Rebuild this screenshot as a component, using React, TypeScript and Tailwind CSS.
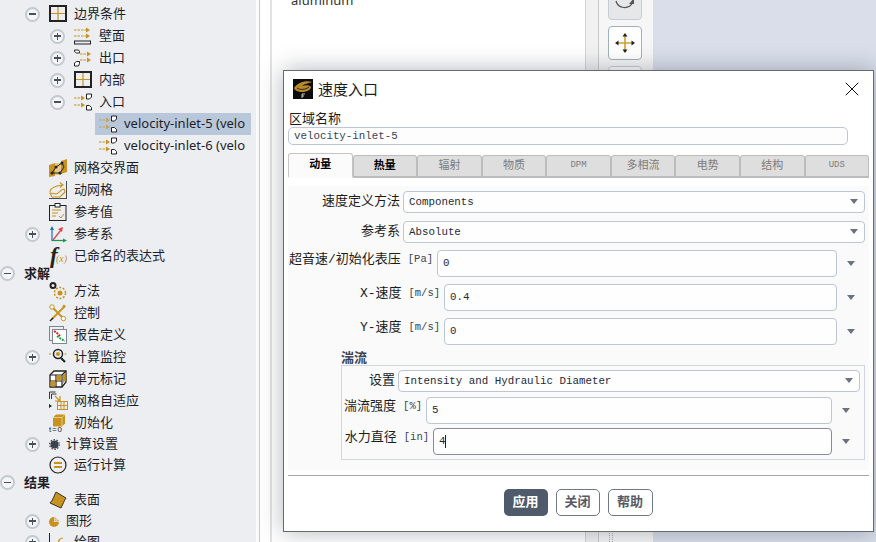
import type { ReactNode } from 'react';
import { X } from 'lucide-react';

const gold = '#c8921e';
const ink = '#222';

function Svg({ w = 18, h = 18, children }: { w?: number; h?: number; children: ReactNode }) {
  return (
    <svg width={w} height={h} viewBox={`0 0 ${w} ${h}`} fill="none" className="shrink-0">
      {children}
    </svg>
  );
}

function Arrow({ y, x = 0, len = 12 }: { y: number; x?: number; len?: number }) {
  return (
    <g>
      <path d={`M${x} ${y}h${len}`} stroke={gold} strokeWidth="1" strokeDasharray="2.5 1" />
      <path d={`M${x + len - 1} ${y - 2.5}l4 2.5l-4 2.5z`} fill={gold} />
    </g>
  );
}

function TreeIcon({ name }: { name: string }) {
  switch (name) {
    case 'grid':
      return (
        <Svg>
          <rect x="1" y="1" width="16" height="15" stroke={ink} strokeWidth="2" />
          <path d="M9 2v13M2 8.500h14" stroke={gold} strokeWidth="1.200" />
        </Svg>
      );
    case 'wall':
      return (
        <Svg>
          <Arrow y={3} x={0} len={13} />
          <Arrow y={9} x={0} len={13} />
          <rect x="0.500" y="14" width="16" height="3" stroke={ink} strokeWidth="1" />
        </Svg>
      );
    case 'outlet':
      return (
        <Svg>
          <path d="M0.500 1h4l1 1.500v1.500h-3l-2-1.500z" stroke={ink} fill="#fff" />
          <path d="M0.500 17v-3l2-1.500h3v2l-1 2.500z" stroke={ink} fill="#fff" />
          <Arrow y={5} x={6} len={8} />
          <Arrow y={11} x={6} len={8} />
        </Svg>
      );
    case 'inlet':
      return (
        <Svg>
          <Arrow y={5} x={0} len={8} />
          <Arrow y={12} x={0} len={8} />
          <path d="M12.500 1h5v3l-2 2h-3z" stroke={ink} fill="#fff" />
          <path d="M12.500 12.500h3l2 2v2.500h-5z" stroke={ink} fill="#fff" />
        </Svg>
      );
    case 'inletSel':
      return (
        <Svg>
          <g opacity="0.65">
            <Arrow y={5} x={0} len={8} />
            <Arrow y={12} x={0} len={8} />
          </g>
          <path d="M12.500 1h5v3l-2 2h-3z" stroke={ink} fill="#fff" />
          <path d="M12.500 12.500h3l2 2v2.500h-5z" stroke={ink} fill="#fff" />
        </Svg>
      );
    case 'interface':
      return (
        <Svg>
          <path d="M0 6l6-2v13l-6 1zM12 2l6-2v13l-6 2z" fill={gold} />
          <path d="M6 4h6v12H6z" fill="#e6c98a" />
          <path d="M3 14l4-6l6-4l2 4l-4 6z" stroke={ink} strokeWidth="1" />
          <circle cx="3" cy="14" r="1.500" fill={ink} />
          <circle cx="7" cy="8" r="1.500" fill={ink} />
          <circle cx="13" cy="4" r="1.500" fill={ink} />
          <circle cx="11" cy="14" r="1.500" fill={ink} />
        </Svg>
      );
    case 'dynamic':
      return (
        <Svg>
          <path d="M17.500 0v18M0 17.500h17" stroke={ink} strokeWidth="0.800" />
          <path d="M1 11c0-4 4-5 7-6l5-1M11 1.500l3 2.500l-3 2.500" stroke={gold} strokeWidth="1.100" />
          <path d="M1 12l2 4h8l5-5l-1-3c-4 0-5 5-8 5c-2 0-3-1-6-1z" stroke={gold} strokeWidth="1.100" />
        </Svg>
      );
    case 'refval':
      return (
        <Svg>
          <rect x="0.500" y="2.500" width="16.500" height="15" stroke={ink} />
          <rect x="6" y="0.500" width="5" height="3.500" fill="#fff" stroke={ink} />
          <path d="M3 7h9M3 10h6M3 13h4" stroke={gold} />
          <path d="M10 13l2 2l3-4" stroke={gold} />
        </Svg>
      );
    case 'frame':
      return (
        <Svg>
          <path d="M3 4v12" stroke="#1670b8" strokeWidth="1.200" />
          <path d="M1 5l2-4l2 4z" fill="#1670b8" />
          <path d="M3 15.500h12" stroke="#169a4a" strokeWidth="1.200" />
          <path d="M14 13.500l4 2l-4 2z" fill="#169a4a" />
          <path d="M4 15L12 5" stroke="#e04848" strokeWidth="1.300" />
          <path d="M9 4l5-2l-1 5z" fill="#e04848" />
        </Svg>
      );
    case 'fx':
      return (
        <div className="w-[18px] h-[18px] shrink-0 relative font-['Liberation_Serif',serif] italic text-[#222] leading-none">
          <span className="absolute left-[1px] -top-[3px] text-[23px] font-bold">f</span>
          <span className="absolute left-[7px] top-[7px] text-[10px] text-[#c8921e]">(x)</span>
        </div>
      );
    case 'method':
      return (
        <Svg>
          <circle cx="4" cy="3.500" r="2.500" stroke={ink} strokeWidth="2" />
          <circle cx="11" cy="11" r="2.500" fill={gold} />
          <circle cx="11" cy="11" r="5.500" stroke={gold} strokeWidth="1.500" strokeDasharray="2 1.500" />
        </Svg>
      );
    case 'control':
      return (
        <Svg>
          <path d="M2 2l14 14M16 2L3 15" stroke={gold} strokeWidth="1.800" />
          <circle cx="3" cy="3" r="2.200" stroke={gold} fill="#fff" />
          <circle cx="14.500" cy="14.500" r="2.200" stroke={gold} fill="#fff" />
          <path d="M14 1.500l2 1.500" stroke={gold} strokeWidth="2.500" />
          <path d="M1 17l3-3" stroke={ink} strokeWidth="1.500" />
        </Svg>
      );
    case 'report':
      return (
        <Svg>
          <rect x="0.500" y="0.500" width="14" height="14" fill="#eee" stroke="#7d8794" />
          <rect x="3.500" y="3.500" width="14" height="14" fill="#fff" stroke="#7d8794" />
          <path d="M5 5l3 2l3 3" stroke="#d92020" strokeWidth="2" strokeDasharray="2 1" />
          <path d="M8 10l4 3l4 2" stroke="#20a040" strokeWidth="2" strokeDasharray="2 1" />
        </Svg>
      );
    case 'monitor':
      return (
        <Svg>
          <path d="M0 6h2M15.500 6h2" stroke={gold} />
          <circle cx="9" cy="6" r="4.500" stroke={ink} strokeWidth="1.500" />
          <circle cx="9" cy="6" r="2" fill={gold} />
          <path d="M12 10l4 4" stroke={ink} strokeWidth="2.200" />
        </Svg>
      );
    case 'cell':
      return (
        <Svg>
          <path d="M1 5l4-4h12v11l-4 5H1z" stroke={ink} strokeWidth="1.300" fill="#fff" />
          <path d="M1 5h12v12M13 5l4-4M7 5v12M1 11h12" stroke={ink} strokeWidth="1.200" />
          <rect x="1.500" y="11.500" width="5" height="5" fill={gold} />
          <rect x="7.500" y="5.500" width="5" height="5" fill={gold} />
          <path d="M14 5l2.500-2.500v8L14 13z" fill={gold} />
        </Svg>
      );
    case 'adapt':
      return (
        <Svg w={20} h={20}>
          <path d="M0.500 8V1h6M2.500 8V3h5" stroke={ink} strokeWidth="0.900" />
          <path d="M0 13l3 2l-3 2z" fill={ink} />
          <path d="M6 5l5 5M11 5v5H6" stroke={gold} strokeWidth="1.200" />
          <rect x="8.500" y="10.500" width="10" height="8" stroke={gold} />
          <path d="M12 11v7M15 11v7M9 14.500h9" stroke={gold} />
        </Svg>
      );
    case 'init':
      return (
        <Svg>
          <path d="M4 3.500l3-3h9v9l-3 3H4z" fill={gold} />
          <path d="M4 3.500h9v9M13 3.500l3-3" stroke="#fff" strokeWidth="0.500" />
          <text x="0" y="18" fontSize="8" fill={ink} fontFamily="Liberation Sans, sans-serif" letterSpacing="0.800">t=0</text>
        </Svg>
      );
    case 'gear':
      return (
        <Svg w={11} h={11}>
          <circle cx="5.500" cy="5.500" r="4" fill="#3c4350" />
          <circle cx="5.500" cy="5.500" r="4.800" stroke="#3c4350" strokeWidth="1.200" strokeDasharray="1.500 1.500" />
        </Svg>
      );
    case 'run':
      return (
        <Svg>
          <circle cx="9" cy="9" r="8" stroke={ink} strokeWidth="1.200" />
          <path d="M5 7h8M5 11h8" stroke={gold} strokeWidth="2" />
        </Svg>
      );
    case 'surface':
      return (
        <Svg>
          <path d="M7 1l10 6c-2 3-3 6-5 10L1 12c3-3 4-7 6-11z" fill={gold} stroke={ink} strokeWidth="0.900" />
        </Svg>
      );
    case 'graphics':
      return (
        <Svg w={11} h={11}>
          <circle cx="5" cy="6" r="5" fill={gold} />
          <path d="M5 0.500h6v5.500H5z" fill="#eceef1" />
          <path d="M6 1.500l3.500 3.500H6z" stroke={gold} strokeWidth="0.700" />
        </Svg>
      );
    case 'plot':
      return (
        <Svg>
          <path d="M0.500 0v18" stroke={ink} />
          <path d="M9 14c0-6 1-9 5-9" stroke={gold} strokeWidth="1.200" />
        </Svg>
      );
    default:
      return null;
  }
}

function Expander({ open }: { open: boolean }) {
  return (
    <span className="w-[15px] h-[15px] rounded-full border-2 border-[#c3c9d1] bg-[#f4f5f7] flex items-center justify-center shrink-0 relative">
      <span className="w-[7px] h-[1.500px] bg-[#4a505a] block" />
      {!open && <span className="absolute w-[1.500px] h-[7px] bg-[#4a505a] block" />}
    </span>
  );
}

type Row = {
  pad: number;
  exp?: 'open' | 'closed';
  icon?: string;
  label: string;
  h?: number;
  gap?: number;
  bold?: boolean;
  leaf?: boolean;
  selected?: boolean;
};

// pad = left edge of the expander slot (expander is 15 wide, icon follows 9 later)
const rows: Row[] = [
  { pad: 25, exp: 'open', icon: 'grid', label: '边界条件' },
  { pad: 50, exp: 'closed', icon: 'wall', label: '壁面' },
  { pad: 50, exp: 'closed', icon: 'outlet', label: '出口' },
  { pad: 50, exp: 'closed', icon: 'grid', label: '内部' },
  { pad: 50, exp: 'open', icon: 'inlet', label: '入口' },
  { pad: 99, leaf: true, icon: 'inletSel', label: 'velocity-inlet-5 (velo', selected: true },
  { pad: 99, leaf: true, icon: 'inlet', label: 'velocity-inlet-6 (velo' },
  { pad: 25, icon: 'interface', label: '网格交界面' },
  { pad: 25, icon: 'dynamic', label: '动网格' },
  { pad: 25, icon: 'refval', label: '参考值' },
  { pad: 25, exp: 'closed', icon: 'frame', label: '参考系' },
  { pad: 25, icon: 'fx', label: '已命名的表达式' },
  { pad: 0, exp: 'open', label: '求解', bold: true, h: 13 },
  { pad: 25, icon: 'method', label: '方法' },
  { pad: 25, icon: 'control', label: '控制' },
  { pad: 25, icon: 'report', label: '报告定义' },
  { pad: 25, exp: 'closed', icon: 'monitor', label: '计算监控' },
  { pad: 25, icon: 'cell', label: '单元标记' },
  { pad: 25, icon: 'adapt', label: '网格自适应' },
  { pad: 25, icon: 'init', label: '初始化' },
  { pad: 25, exp: 'closed', icon: 'gear', label: '计算设置', h: 20, gap: 2 },
  { pad: 25, icon: 'run', label: '运行计算' },
  { pad: 0, exp: 'open', label: '结果', bold: true, h: 13 },
  { pad: 25, icon: 'surface', label: '表面' },
  { pad: 25, exp: 'closed', icon: 'graphics', label: '图形', h: 20, gap: 2 },
  { pad: 25, exp: 'closed', icon: 'plot', label: '绘图' },
];

function TreeRow({ row }: { row: Row }) {
  return (
    <div
      className="flex items-center whitespace-nowrap"
      style={{ height: row.h ?? 22, paddingLeft: row.pad }}
    >
      {row.leaf ? (
        <div className={`flex items-center -ml-[4px] pl-[4px] h-[22px] w-[156px] overflow-hidden shrink-0 ${row.selected ? 'bg-[#b9c7da]' : ''}`}>
          <TreeIcon name={row.icon!} />
          <span className="ml-[7px]">{row.label}</span>
        </div>
      ) : (
        <>
          {row.exp ? <Expander open={row.exp === 'open'} /> : <span className="w-[15px] shrink-0" />}
          {row.icon && (
            <span className={`ml-[9px] flex ${row.gap ? '' : 'w-[18px]'}`}>
              <TreeIcon name={row.icon} />
            </span>
          )}
          <span className={`${row.gap ? 'ml-[6px]' : row.icon ? 'ml-[7px]' : 'ml-[9px]'} ${row.bold ? 'font-bold' : ''}`}>
            {row.label}
          </span>
        </>
      )}
    </div>
  );
}

function Caret() {
  return <span className="w-0 h-0 border-l-[4px] border-r-[4px] border-t-[5px] border-l-transparent border-r-transparent border-t-[#6b7280] block" />;
}

function SelectField({ label, value, width }: { label: string; value: string; width: string }) {
  return (
    <div className="flex items-center h-[22px]">
      <span className={`${width} shrink-0 text-right pr-[3px] text-[13px]`}>{label}</span>
      <div className="flex-1 h-full rounded-[4px] border border-[#bcc6d6] bg-[#fefefe] flex items-center justify-between pl-[5px] pr-[5px]">
        <span className="text-[10.800px] text-[#1e2a3a]">{value}</span>
        <span className="mr-[1px] -mt-[2px]"><Caret /></span>
      </div>
    </div>
  );
}

function NumberField({
  label,
  unit,
  value,
  width,
  focus,
  caret,
}: {
  label: string;
  unit: string;
  value: string;
  width: string;
  focus?: boolean;
  caret?: boolean;
}) {
  return (
    <div className="flex items-start h-[27px]">
      <div className={`${width} shrink-0 flex justify-end items-center h-[20px] pr-[4px] text-[13px] whitespace-nowrap`}>
        <span>{label}</span>
        <span className="ml-[7px] text-[10.500px] text-[#3a4454]">{unit}</span>
      </div>
      <div
        className={`flex-1 h-full rounded-[4px] border bg-[#fefefe] flex items-center pl-[5px] text-[10.800px] text-[#1e2a3a] ${focus ? 'border-[#858d9a]' : 'border-[#bcc6d6]'}`}
      >
        {value}
        {caret && <span className="w-px h-[13px] bg-[#222] block" />}
      </div>
      <span className="w-[28px] h-full shrink-0 flex items-center justify-center"><Caret /></span>
    </div>
  );
}

const tabs = [
  { name: '动量', on: true },
  { name: '热量', strong: true },
  { name: '辐射' },
  { name: '物质' },
  { name: 'DPM', latin: true },
  { name: '多相流' },
  { name: '电势' },
  { name: '结构' },
  { name: 'UDS', latin: true },
];

function Dialog() {
  return (
    <div className="absolute left-[283px] top-[70px] w-[591px] h-[462px] bg-white border border-[#666b70] shadow-[0_0_22px_rgba(40,45,60,0.35)] font-['Liberation_Mono','Noto_Sans_CJK_SC',monospace] text-[#1c1c1c] px-[4px]">
      <div className="flex items-center h-[36px] pl-[5px] font-['Noto_Sans_CJK_SC',sans-serif]">
        <svg width="20" height="20" viewBox="0 0 20 20" className="shrink-0">
          <rect width="20" height="20" fill="#0c0c0c" />
          <path d="M1 9c4-6 12-8 18-6c-3 1-8 2-10 4c3-1 8-1 9 1c0 3-5 5-9 5C6 13 2 12 1 9z" fill="#b8892a" />
          <path d="M4 9c3 2 8 2 12-1" stroke="#0c0c0c" strokeWidth="0.800" fill="none" />
          <path d="M9 15h3M9 17h2M9 15v4" stroke="#ddd" strokeWidth="0.900" />
        </svg>
        <span className="ml-[5px] text-[15px]">速度入口</span>
        <span className="ml-auto mr-[5px] flex"><X size={24} strokeWidth={1} color="#111" /></span>
      </div>
      <div className="text-[13px] leading-[15px] pl-[1px] mt-[3px] mb-[2px] font-['Noto_Sans_CJK_SC',sans-serif]">区域名称</div>
      <div className="w-[560px] h-[18px] rounded-[5px] border border-[#bcc6d6] bg-[#fdfdfe] flex items-center pl-[5px] text-[10.800px] text-[#3a4454]">velocity-inlet-5</div>
      <div className="flex w-[581px] h-[25px] mt-[8px] items-end">
        {tabs.map((t) => (
          <div
            key={t.name}
            className={`flex-1 flex items-center justify-center rounded-t-[3px] border border-b-2 ${t.latin ? 'text-[9px]' : 'text-[11px]'} ${t.on ? 'h-[25px] bg-[#fbfbfb] border-[#c4c4c4] border-b-[#fbfbfb] font-bold text-black' : 'h-[23px] bg-[#dedede] border-[#bcbcbc]'} ${t.strong ? 'font-bold text-black' : ''} ${!t.on && !t.strong ? 'text-[#7c7c7c]' : ''}`}
          >
            {t.name}
          </div>
        ))}
      </div>
      <div className="w-[581px] h-[284px] mt-[8px] bg-[#fafafb] pt-[5px]">
        <div className="flex flex-col gap-[8px] pr-[4px]">
          <SelectField label="速度定义方法" value="Components" width="w-[115px]" />
          <SelectField label="参考系" value="Absolute" width="w-[115px]" />
        </div>
        <div className="flex flex-col gap-[7px] mt-[7px] pr-[4px]">
          <NumberField label="超音速/初始化表压" unit="[Pa]" value="0" width="w-[149px]" />
          <NumberField label="X-速度" unit="[m/s]" value="0.4" width="w-[156px]" />
          <NumberField label="Y-速度" unit="[m/s]" value="0" width="w-[156px]" />
        </div>
        <div className="ml-[53px] mt-[7px] text-[13px] leading-[13px] font-bold text-[#3a4454]">湍流</div>
        <div className="ml-[53px] mr-[4px] h-[95px] border border-[#d0d5e0] pl-[2px] pr-[4px] pt-[4px]">
          <SelectField label="设置" value="Intensity and Hydraulic Diameter" width="w-[54px]" />
          <div className="mt-[5px] flex flex-col gap-[4px]">
            <NumberField label="湍流强度" unit="[%]" value="5" width="w-[82px]" />
            <NumberField label="水力直径" unit="[in]" value="4" width="w-[89px]" focus caret />
          </div>
        </div>
      </div>
      <div className="w-[581px] h-px bg-[#a6a8ab] mt-[5px]" />
      <div className="flex justify-center gap-[8px] mt-[13px] pr-[1px] text-[13px] font-bold">
        <button className="w-[44px] h-[27px] rounded-[5px] bg-[#4f5a6a] text-white">应用</button>
        <button className="w-[44px] h-[27px] rounded-[5px] border border-[#6f7885] text-[#555b66] bg-white">关闭</button>
        <button className="w-[45px] h-[27px] rounded-[5px] border border-[#6f7885] text-[#555b66] bg-white">帮助</button>
      </div>
    </div>
  );
}

export default function App() {
  return (
    <div className="relative w-[876px] h-[542px] overflow-hidden flex bg-white font-['Noto_Sans','Noto_Sans_CJK_SC',sans-serif] text-[13px] text-[#1e1e2a]">
      <div className="w-[256px] shrink-0 bg-[#eceef1] pt-[3px] overflow-hidden">
        {rows.map((r) => (
          <TreeRow key={r.label} row={r} />
        ))}
      </div>
      <div className="w-[3px] shrink-0 bg-[#fbfbfb]" />
      <div className="w-px shrink-0 bg-[#c9c9c9]" />
      <div className="w-[10px] shrink-0 bg-white" />
      <div className="w-[2px] shrink-0 bg-[#e2e2e2]" />
      <div className="w-[313px] shrink-0 bg-white pl-[19px]">
        <div className="-mt-[9px] text-[13px] text-[#333]">aluminum</div>
      </div>
      <div className="w-px shrink-0 bg-[#d4d4d4]" />
      <div className="w-[12px] shrink-0 bg-[#f1f1f1]" />
      <div className="w-px shrink-0 bg-[#c9c9c9]" />
      <div className="w-[54px] shrink-0 bg-[#f6f6f6] pl-[9px] flex flex-col gap-[6px] -mt-[14px]">
        <div className="w-[34px] h-[34px] shrink-0 rounded-[4px] border border-[#c5ccd6] bg-[#e6e7e9] flex items-center justify-center">
          <svg width="22" height="22" viewBox="0 0 22 22" fill="none">
            <path d="M2 9c2 8 13 9 17 1" stroke="#555" strokeWidth="1.200" />
            <path d="M20 6v6h-5z" fill="#555" />
          </svg>
        </div>
        <div className="w-[34px] h-[34px] shrink-0 rounded-[4px] border border-[#9fb0c0] bg-white flex items-center justify-center">
          <svg width="22" height="22" viewBox="0 0 22 22" fill="none">
            <path d="M11 4v14M4 11h14" stroke="#d0a030" strokeWidth="1.600" />
            <path d="M11 1l2.500 3.500h-5zM11 21l2.500-3.500h-5zM1 11l3.500-2.500v5zM21 11l-3.500-2.500v5z" fill="#222" />
          </svg>
        </div>
        <div className="w-[34px] h-[34px] shrink-0 rounded-[4px] border border-[#c5ccd6] bg-white" />
        <div className="mt-auto mb-0 ml-[1px] w-[4px] h-[9px] border-x border-dotted border-[#aaa]" />
      </div>
      <div className="flex-1 bg-[#d9deea]" />
      <Dialog />
    </div>
  );
}
